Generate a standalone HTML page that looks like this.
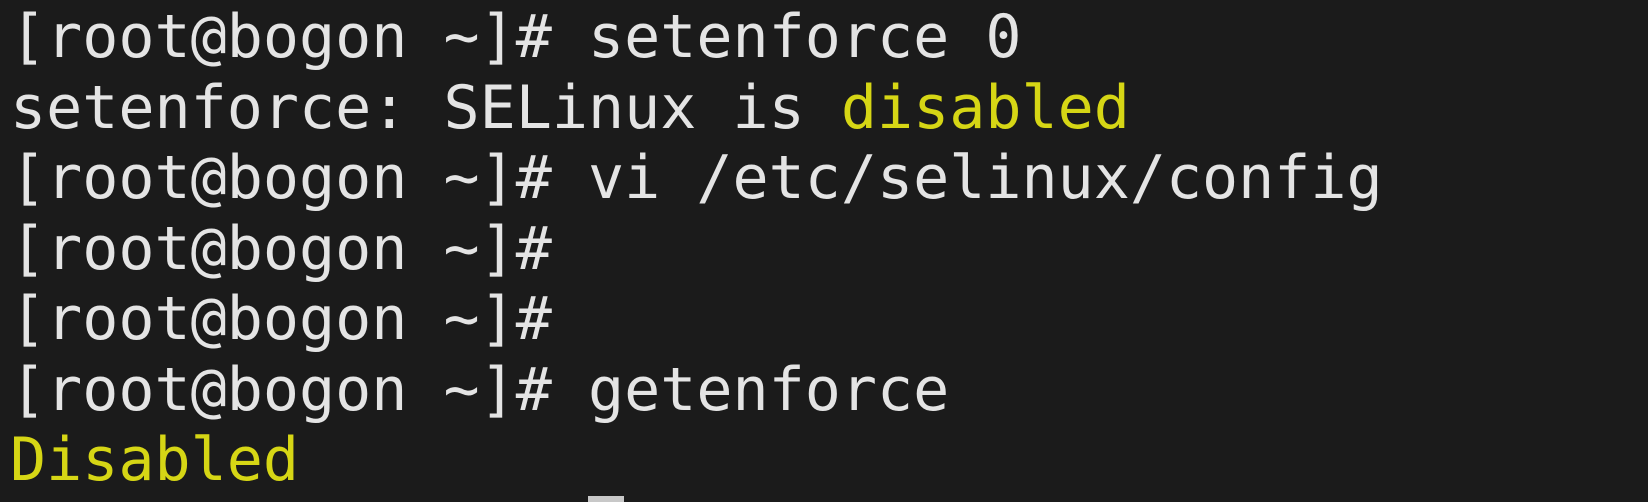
<!DOCTYPE html>
<html><head><style>
html,body{margin:0;padding:0;background:#1b1b1b;width:1648px;height:502px;overflow:hidden}
#w{position:relative;width:1648px;height:502px;overflow:hidden;background:#1b1b1b}
pre{margin:0;position:absolute;left:10px;top:2px;height:500px;overflow:hidden;font-family:"DejaVu Sans Mono","Liberation Mono",monospace;font-size:60px;line-height:70.5px;color:#e4e4e4}
.y{color:#d6d615}
.c{background:#c8c8c8;color:#c8c8c8}
</style></head><body>
<div id="w">
<pre>[root@bogon ~]# setenforce 0
setenforce: SELinux is <span class="y">disabled</span>
[root@bogon ~]# vi /etc/selinux/config
[root@bogon ~]#
[root@bogon ~]#
[root@bogon ~]# getenforce
<span class="y">Disabled</span>
[root@bogon ~]# <span class="c"> </span></pre>
</div>
</body></html>
